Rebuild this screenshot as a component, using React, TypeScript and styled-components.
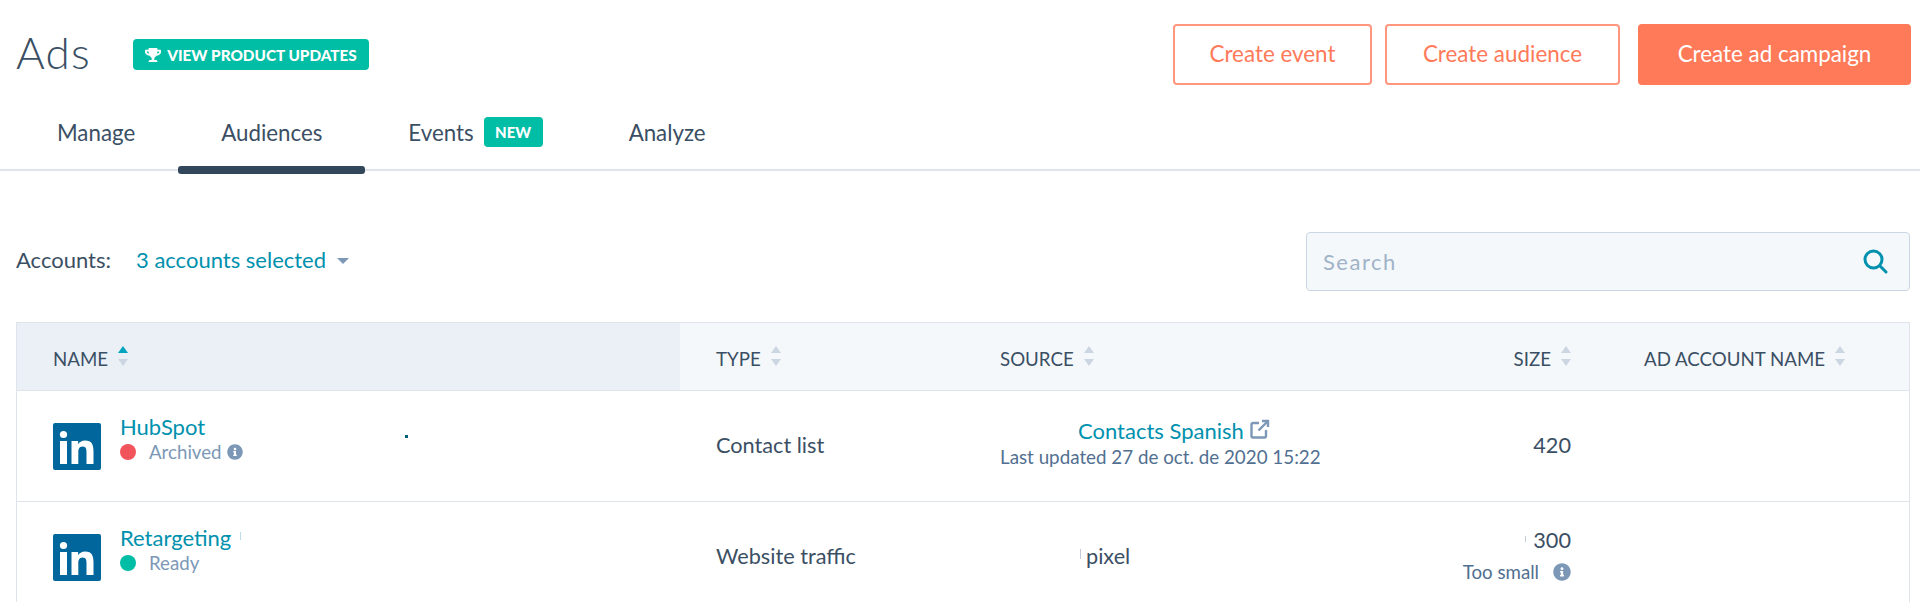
import React from "react";
import styled, { createGlobalStyle } from "styled-components";
import { FaInfoCircle, FaTrophy } from "react-icons/fa";

const GlobalStyle = createGlobalStyle`
  html, body {
    margin: 0;
    padding: 0;
    height: 602px;
    overflow: hidden;
    background: #fff;
    font-family: Lato, "Open Sans", sans-serif;
    color: #3b4f64;
  }
`;

const Page = styled.div`
  width: 1920px;
  height: 602px;
  overflow: hidden;
`;

const TitleRow = styled.header`
  display: flex;
  align-items: center;
  height: 61px;
  padding: 24px 9px 0 16px;
`;

const Title = styled.h1`
  margin: 0 0 6px;
  width: 117px;
  font-size: 44px;
  font-weight: 300;
  line-height: 1;
  letter-spacing: 1.2px;
`;

const UpdatesBadge = styled.span`
  display: flex;
  align-items: center;
  justify-content: center;
  gap: 6px;
  width: 236px;
  height: 31px;
  border-radius: 4px;
  background: #00bda5;
  color: #fff;
  font-size: 15.3px;
  font-weight: 900;
  white-space: nowrap;
`;

const Actions = styled.div`
  display: flex;
  margin-left: auto;
`;

const ActionButton = styled.button<{ $primary?: boolean; $width: number; $gap: number }>`
  width: ${(p) => p.$width}px;
  height: 61px;
  margin-left: ${(p) => p.$gap}px;
  padding: 0 0 3px;
  border: 2px solid ${(p) => (p.$primary ? "#ff7a59" : "#ff967d")};
  border-radius: 4px;
  background: ${(p) => (p.$primary ? "#ff7a59" : "#fff")};
  color: ${(p) => (p.$primary ? "#fff" : "#ff7a59")};
  font-family: inherit;
  font-size: 22.4px;
  font-weight: 400;
`;

const TabBar = styled.nav`
  display: flex;
  height: 84px;
  padding-left: 14px;
  border-bottom: 2px solid #dfe3eb;
`;

const Tab = styled.div<{ $active?: boolean }>`
  position: relative;
  display: flex;
  align-items: center;
  box-sizing: border-box;
  height: 84px;
  padding: 10px 43px 0;
  font-size: 22.3px;

  &::after {
    content: "";
    display: ${(p) => (p.$active ? "block" : "none")};
    position: absolute;
    left: 0;
    right: 0;
    top: 81px;
    height: 8px;
    border-radius: 3px;
    background: #33475b;
  }
`;

const NewBadge = styled.span`
  display: flex;
  align-items: center;
  justify-content: center;
  width: 59px;
  height: 30px;
  margin-left: 10px;
  border-radius: 4px;
  background: #00bda5;
  color: #fff;
  font-size: 15px;
  font-weight: 900;
`;

const FilterRow = styled.div`
  display: flex;
  align-items: center;
  justify-content: space-between;
  margin-top: 61px;
  padding: 0 10px 0 16px;
`;

const AccountFilter = styled.div`
  display: flex;
  align-items: center;
  padding-bottom: 5px;
  font-size: 22px;
`;

const FilterValue = styled.span`
  margin-left: 25px;
  color: #0091ae;
`;

const Caret = styled.span`
  width: 0;
  height: 0;
  margin: 3px 0 0 11px;
  border-left: 6px solid transparent;
  border-right: 6px solid transparent;
  border-top: 6px solid #7c98b6;
`;

const SearchBox = styled.div`
  display: flex;
  align-items: center;
  justify-content: space-between;
  box-sizing: border-box;
  width: 604px;
  height: 59px;
  padding: 0 21px 0 16px;
  border: 1.5px solid #cbd6e2;
  border-radius: 4px;
  background: #f5f8fa;
  color: #a0b3c8;
  font-size: 22px;
  letter-spacing: 1.5px;
`;

const Table = styled.section`
  margin: 31px 10px 0 16px;
  border: 1px solid #dfe3eb;
  border-bottom: 0;
`;

const Row = styled.div<{ $head?: boolean }>`
  display: grid;
  grid-template-columns: 663px 284px 450px 194px 1fr;
  height: ${(p) => (p.$head ? "67px" : "110px")};
  border-bottom: 1px solid #dfe3eb;
  background: ${(p) => (p.$head ? "#f5f8fa" : "#fff")};
`;

const HeadCell = styled.div<{ $sorted?: boolean; $right?: boolean }>`
  display: flex;
  align-items: center;
  justify-content: ${(p) => (p.$right ? "flex-end" : "flex-start")};
  padding: 5px 37px 0 36px;
  background: ${(p) => (p.$sorted ? "#eaf0f6" : "transparent")};
  font-size: 18.7px;
  white-space: nowrap;
`;

const SortArrows = styled.span`
  display: flex;
  flex-direction: column;
  gap: 6px;
  margin-left: 10px;
  transform: translateY(-3px);
`;

const Arrow = styled.i<{ $down?: boolean; $on?: boolean }>`
  display: block;
  width: 0;
  height: 0;
  border-left: 5.5px solid transparent;
  border-right: 5.5px solid transparent;
  border-${(p) => (p.$down ? "top" : "bottom")}: 7px solid
    ${(p) => (p.$on ? "#00a4bd" : "#cbd6e2")};
`;

const Cell = styled.div<{ $right?: boolean }>`
  display: flex;
  flex-direction: column;
  justify-content: center;
  align-items: ${(p) => (p.$right ? "flex-end" : "flex-start")};
  padding: 0 37px 3px 36px;
  font-size: 21.7px;
  white-space: nowrap;
`;

const NameCell = styled.div`
  display: flex;
  align-items: center;
  gap: 19px;
  padding: 0 36px;
`;

const LogoMark = styled.svg`
  flex: none;
  width: 48px;
  height: 47px;
`;

const NameStack = styled.div`
  display: flex;
  flex-direction: column;
  gap: 1px;
  transform: translateY(-8px);
`;

const NameLink = styled.span`
  position: relative;
  color: #0091ae;
  font-size: 22px;
  line-height: 26px;
  white-space: nowrap;
`;

const Speck = styled.i<{ $left: number; $top: number; $w: number; $h: number; $color: string }>`
  position: absolute;
  left: ${(p) => p.$left}px;
  top: ${(p) => p.$top}px;
  width: ${(p) => p.$w}px;
  height: ${(p) => p.$h}px;
  background: ${(p) => p.$color};
`;

const Status = styled.span`
  display: flex;
  align-items: center;
  color: #7c98b6;
  font-size: 18.7px;
  line-height: 22px;

  svg {
    margin-left: 5px;
  }
`;

const Dot = styled.span<{ $color: string }>`
  width: 16px;
  height: 16px;
  margin-right: 13px;
  border-radius: 50%;
  background: ${(p) => p.$color};
`;

const SourceLink = styled.span`
  display: flex;
  align-items: center;
  gap: 6px;
  margin: -2px 0 1px 78px;
  color: #0091ae;
  font-size: 22px;
  line-height: 26px;

  svg {
    flex: none;
    margin-top: -4px;
  }
`;

const SubText = styled.span`
  color: #516f90;
  font-size: 18.8px;
  line-height: 24px;
`;

const PixelText = styled.span`
  position: relative;
  margin-left: 86px;
`;

const SizeValue = styled.span`
  position: relative;
  line-height: 26px;
`;

const TooSmall = styled.span`
  display: flex;
  align-items: center;
  margin-top: 7px;
  color: #516f90;
  font-size: 18.7px;
  line-height: 24px;

  svg {
    margin-left: 14px;
    color: #7c98b6;
  }
`;

const columns = [
  { label: "TYPE" },
  { label: "SOURCE" },
  { label: "SIZE", right: true },
  { label: "AD ACCOUNT NAME" },
];

const Sort = ({ on }: { on?: boolean }) => (
  <SortArrows>
    <Arrow $on={on} />
    <Arrow $down />
  </SortArrows>
);

const LinkedInLogo = () => (
  <LogoMark viewBox="0 0 48 47">
    <rect width="48" height="47" rx="2" fill="#00669c" />
    <circle cx="10.5" cy="11.5" r="3.6" fill="#fff" />
    <rect x="7" y="18" width="7" height="23" fill="#fff" />
    <path
      d="M18.5 18h6.6v3.2c1.1-2 3.5-3.8 7-3.8 7 0 8.4 4.6 8.4 10.7V41h-7V29.6c0-2.8-.1-6.2-3.8-6.2-3.8 0-4.4 3-4.4 6V41h-6.8z"
      fill="#fff"
    />
  </LogoMark>
);

const SearchGlyph = () => (
  <svg width="25" height="25" viewBox="0 0 25 25" fill="none" stroke="#0091ae" strokeWidth="3" strokeLinecap="round">
    <circle cx="10.5" cy="10.5" r="8.5" />
    <path d="M16.8 16.8 23 23" />
  </svg>
);

const OpenGlyph = () => (
  <svg width="20" height="20" viewBox="0 0 20 20" fill="none" stroke="#7c98b6" strokeWidth="2.4">
    <path d="M9 4H3A1.5 1.5 0 0 0 1.5 5.5V17A1.5 1.5 0 0 0 3 18.5h11.5A1.5 1.5 0 0 0 16 17v-6" />
    <path d="M12 2h6v6" />
    <path d="M18 2 8.5 11.5" />
  </svg>
);

const App = () => {
  return (
    <Page>
      <GlobalStyle />
      <TitleRow>
        <Title>Ads</Title>
        <UpdatesBadge>
          <FaTrophy size={16} />
          VIEW PRODUCT UPDATES
        </UpdatesBadge>
        <Actions>
          <ActionButton $width={199} $gap={0}>Create event</ActionButton>
          <ActionButton $width={235} $gap={13}>Create audience</ActionButton>
          <ActionButton $width={273} $gap={18} $primary>Create ad campaign</ActionButton>
        </Actions>
      </TitleRow>

      <TabBar>
        <Tab>Manage</Tab>
        <Tab $active>Audiences</Tab>
        <Tab>
          Events
          <NewBadge>NEW</NewBadge>
        </Tab>
        <Tab>Analyze</Tab>
      </TabBar>

      <FilterRow>
        <AccountFilter>
          Accounts:
          <FilterValue>3 accounts selected</FilterValue>
          <Caret />
        </AccountFilter>
        <SearchBox>
          Search
          <SearchGlyph />
        </SearchBox>
      </FilterRow>

      <Table>
        <Row $head>
          <HeadCell $sorted>
            NAME
            <Sort on />
          </HeadCell>
          {columns.map((c) => (
            <HeadCell key={c.label} $right={c.right}>
              {c.label}
              <Sort />
            </HeadCell>
          ))}
        </Row>

        <Row>
          <NameCell>
            <LinkedInLogo />
            <NameStack>
              <NameLink>
                HubSpot
                <Speck $left={285} $top={21} $w={3} $h={3} $color="#00607a" />
              </NameLink>
              <Status>
                <Dot $color="#f2545b" />
                Archived
                <FaInfoCircle size={16} color="#7c98b6" />
              </Status>
            </NameStack>
          </NameCell>
          <Cell>Contact list</Cell>
          <Cell>
            <SourceLink>
              Contacts Spanish
              <OpenGlyph />
            </SourceLink>
            <SubText>Last updated 27 de oct. de 2020 15:22</SubText>
          </Cell>
          <Cell $right>420</Cell>
          <Cell />
        </Row>

        <Row>
          <NameCell>
            <LinkedInLogo />
            <NameStack>
              <NameLink>
                Retargeting
                <Speck $left={120} $top={7} $w={1} $h={8} $color="#b8dde5" />
              </NameLink>
              <Status>
                <Dot $color="#00bda5" />
                Ready
              </Status>
            </NameStack>
          </NameCell>
          <Cell>Website traffic</Cell>
          <Cell>
            <PixelText>
              pixel
              <Speck $left={-6} $top={6} $w={1} $h={10} $color="#c3ccd6" />
            </PixelText>
          </Cell>
          <Cell $right>
            <SizeValue>
              300
              <Speck $left={-8} $top={9} $w={1} $h={6} $color="#c3ccd6" />
            </SizeValue>
            <TooSmall>
              Too small
              <FaInfoCircle size={18} />
            </TooSmall>
          </Cell>
          <Cell />
        </Row>
      </Table>
    </Page>
  );
};

export default App;
